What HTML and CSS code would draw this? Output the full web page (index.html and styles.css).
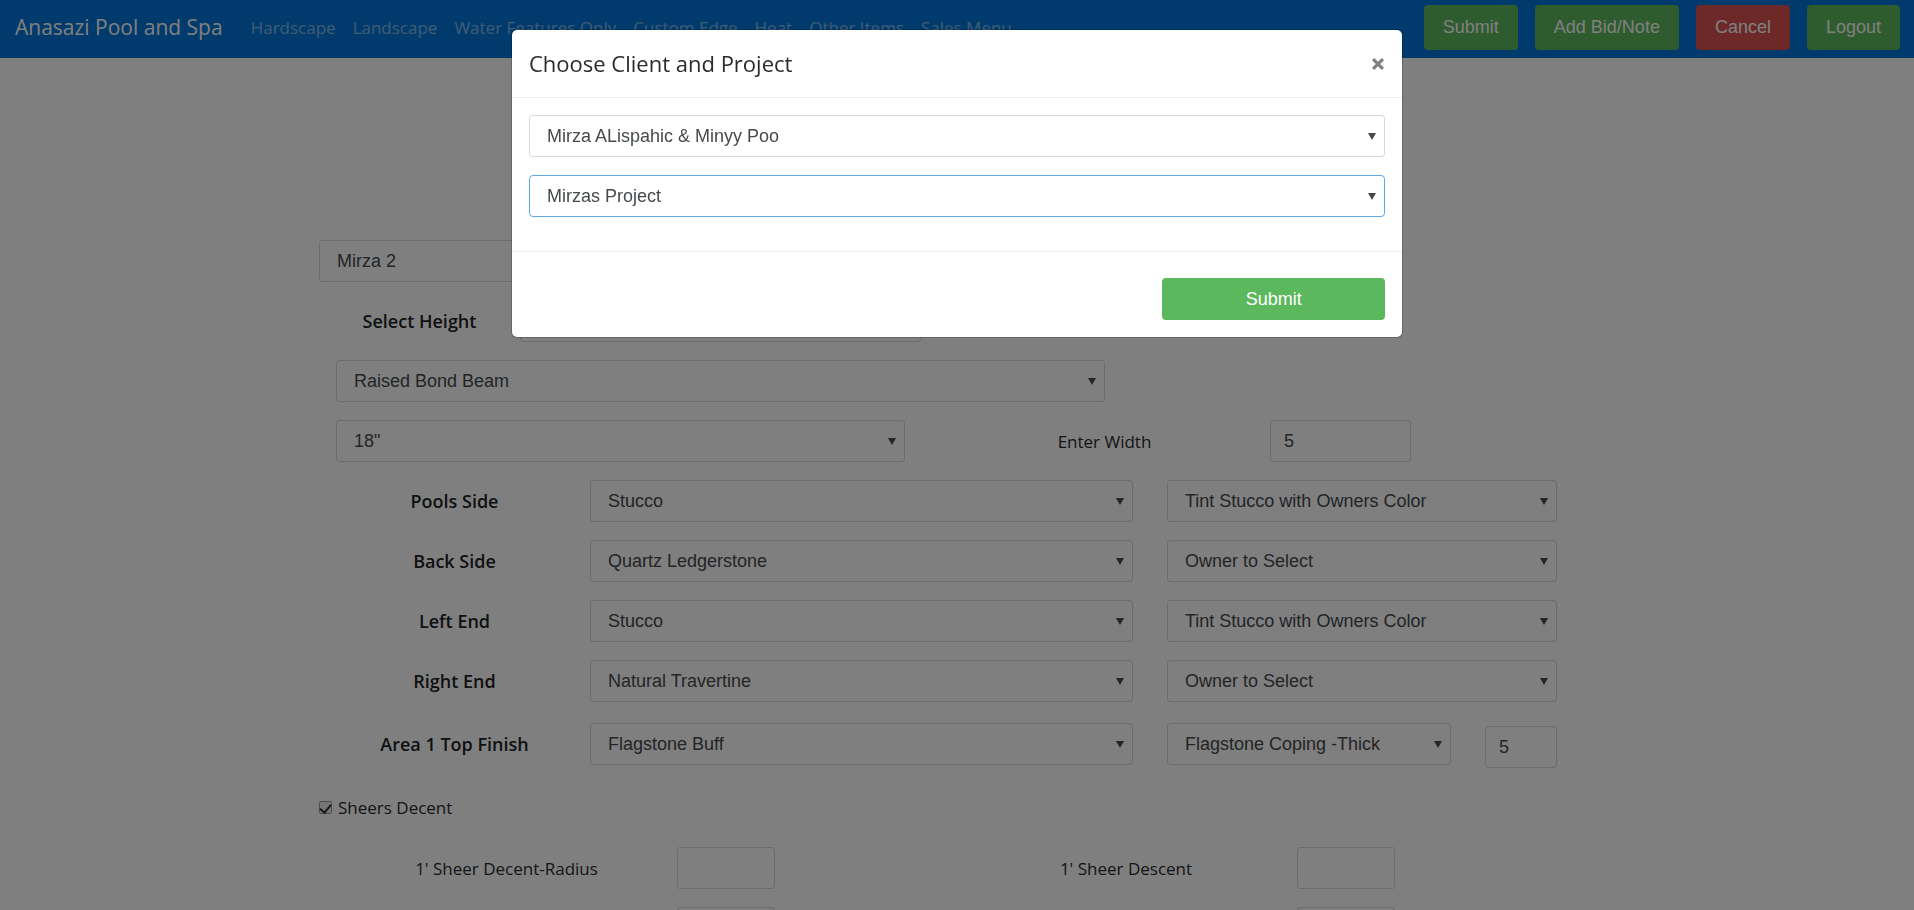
FILE: index.html
```html
<!DOCTYPE html>
<html lang="en">
<head>
<meta charset="utf-8">
<meta name="viewport" content="width=device-width, initial-scale=1">
<title>Anasazi Pool and Spa</title>
<link rel="stylesheet" href="styles.css">
</head>
<body class="modal-open">
<header class="navbar">
  <a class="brand" href="#">Anasazi Pool and Spa</a>
  <nav class="nav-links">
    <a href="#">Hardscape</a>
    <a href="#">Landscape</a>
    <a href="#">Water Features Only</a>
    <a href="#">Custom Edge</a>
    <a href="#">Heat</a>
    <a href="#">Other Items</a>
    <a href="#">Sales Menu</a>
  </nav>
  <div class="nav-actions">
    <button class="btn btn-success" type="button">Submit</button>
    <button class="btn btn-success" type="button">Add Bid/Note</button>
    <button class="btn btn-danger" type="button">Cancel</button>
    <button class="btn btn-success" type="button">Logout</button>
  </div>
</header>

<main class="page">
  <form class="form">
    <div class="row row-client">
      <div class="select"><select aria-label="Client"><option>Mirza 2</option></select></div>
    </div>
    <div class="row row-height">
      <label class="strong" for="height">Select Height</label>
      <div class="select"><select id="height"><option></option></select></div>
    </div>
    <div class="row row-beam">
      <div class="select"><select aria-label="Beam type"><option>Raised Bond Beam</option></select></div>
    </div>
    <div class="row row-width">
      <div class="select"><select aria-label="Beam height"><option>18"</option></select></div>
      <label for="width">Enter Width</label>
      <input class="field" id="width" type="text" value="5">
    </div>
    <div class="row row-side">
      <label class="strong" for="pools">Pools Side</label>
      <div class="select"><select id="pools"><option>Stucco</option></select></div>
      <div class="select"><select aria-label="Pools side color"><option>Tint Stucco with Owners Color</option></select></div>
    </div>
    <div class="row row-side">
      <label class="strong" for="back">Back Side</label>
      <div class="select"><select id="back"><option>Quartz Ledgerstone</option></select></div>
      <div class="select"><select aria-label="Back side color"><option>Owner to Select</option></select></div>
    </div>
    <div class="row row-side">
      <label class="strong" for="left">Left End</label>
      <div class="select"><select id="left"><option>Stucco</option></select></div>
      <div class="select"><select aria-label="Left end color"><option>Tint Stucco with Owners Color</option></select></div>
    </div>
    <div class="row row-side">
      <label class="strong" for="right">Right End</label>
      <div class="select"><select id="right"><option>Natural Travertine</option></select></div>
      <div class="select"><select aria-label="Right end color"><option>Owner to Select</option></select></div>
    </div>
    <div class="row row-side row-top">
      <label class="strong" for="top">Area 1 Top Finish</label>
      <div class="select"><select id="top"><option>Flagstone Buff</option></select></div>
      <div class="coping">
        <div class="select"><select aria-label="Coping"><option>Flagstone Coping -Thick</option></select></div>
        <input class="field" type="text" value="5" aria-label="Coping amount">
      </div>
    </div>
    <div class="check-row">
      <input id="sheers" type="checkbox" checked>
      <label for="sheers">Sheers Decent</label>
    </div>
    <div class="row row-sheer">
      <label for="s1r">1' Sheer Decent-Radius</label>
      <input class="field" id="s1r" type="text">
      <label for="s1">1' Sheer Descent</label>
      <input class="field" id="s1" type="text">
    </div>
    <div class="row row-sheer">
      <input class="field" type="text" aria-label="Second radius quantity">
      <input class="field" type="text" aria-label="Second quantity">
    </div>
  </form>
</main>

<div class="backdrop">
  <section class="modal" role="dialog" aria-modal="true" aria-labelledby="modal-title">
    <header class="modal-header">
      <h1 class="modal-title" id="modal-title">Choose Client and Project</h1>
      <button class="close" type="button" aria-label="Close"><svg viewBox="0 0 13 13" aria-hidden="true"><path d="M2 2l9 9M11 2l-9 9"/></svg></button>
    </header>
    <div class="modal-body">
      <div class="select"><select aria-label="Client"><option>Mirza ALispahic &amp; Minyy Poo</option></select></div>
      <div class="select active"><select aria-label="Project"><option>Mirzas Project</option></select></div>
    </div>
    <footer class="modal-footer">
      <button class="btn btn-success" type="button">Submit</button>
    </footer>
  </section>
</div>
</body>
</html>
```
FILE: styles.css
```css
* { box-sizing: border-box; }

body {
  margin: 0;
  color: #292b2c;
  background: #fff;
  font: 17px/27px "Segoe UI", "Open Sans", sans-serif;
}

.modal-open { height: 100vh; overflow: hidden; }

/* Navigation bar */
.navbar {
  display: flex;
  align-items: center;
  height: 58px;
  padding: 0 14px 3px 15px;
  background: #0275d8;
  white-space: nowrap;
}
.navbar a { text-decoration: none; }
.brand { margin-right: 28px; color: #fff; font-size: 21px; }
.nav-links { display: flex; gap: 17px; }
.nav-links a { color: rgba(255, 255, 255, 0.5); }
.nav-actions {
  display: flex;
  gap: 17px;
  margin-left: auto;
}

.btn {
  height: 45px;
  padding: 0 19px;
  border: 0;
  border-radius: 4px;
  color: #fff;
  font: 18px/27px "Liberation Sans", Arial, sans-serif;
}
.btn-success { background: #5cb85c; }
.btn-danger { background: #d9534f; }

/* Bid form */
.page { padding-top: 182px; }
.form {
  display: flex;
  flex-direction: column;
  gap: 18px;
  width: 66.6667%;
  margin: 0 auto;
}
.row { display: grid; align-items: center; }
.row > label { text-align: center; }
.row > .strong { font-size: 18px; font-weight: 600; color: #212324; }

.row-client { grid-template-columns: 50%; }
.row-height { grid-template-columns: 201fr 401fr 674fr; }
.row-beam { grid-template-columns: 769fr 490fr; padding-left: 17px; }
.row-width { grid-template-columns: 569fr 365fr 141fr 184fr; padding-left: 17px; }
.row-width > label { padding-left: 34px; }
.row-side { grid-template-columns: 254fr 543fr 34fr 390fr; padding: 0 38px 0 17px; }
.row-side > label { padding-right: 17px; }
.row-side > :last-child { grid-column: 4; }
.row-top { align-items: start; margin-top: 3px; }
.row-top > label { padding-top: 8px; }
.coping { display: grid; grid-template-columns: 284fr 72fr; gap: 34px; }
.coping .field { margin-top: 3px; }
.row-sheer { grid-template-columns: 358fr 98fr 522fr 98fr 200fr; }
.row-sheer > .field:first-of-type { grid-column: 2; }
.row-sheer > .field:last-child { grid-column: 4; }
.row-sheer > label:first-child { padding-left: 17px; }
.row-sheer > label:nth-of-type(2) { padding-left: 180px; }

.check-row {
  display: flex;
  align-items: center;
  gap: 6px;
  padding: 8px 0;
}
.check-row input {
  appearance: none;
  display: grid;
  place-items: center;
  width: 13px;
  height: 13px;
  margin: 0;
  border: 1px solid #a0a0a0;
  border-radius: 2px;
  background: #ececec;
}
.check-row input:checked::after {
  content: "";
  width: 5px;
  height: 9px;
  border: solid #303030;
  border-width: 0 2px 2px 0;
  transform: rotate(40deg);
}

/* Fields */
.select { position: relative; min-width: 0; }
.select select,
.field {
  display: block;
  width: 100%;
  min-width: 0;
  height: 42px;
  border: 1px solid rgba(0, 0, 0, 0.15);
  border-radius: 4px;
  background: #fff;
  color: #464a4c;
  font: 18px/24px "Liberation Sans", Arial, sans-serif;
}
.select select { appearance: none; padding: 0 32px 0 17px; }
.field { padding: 0 13px; }
.select::after {
  content: "";
  position: absolute;
  top: 18px;
  right: 9px;
  width: 8px;
  height: 7px;
  background: #464a4c;
  clip-path: polygon(0 0, 100% 0, 50% 100%);
  pointer-events: none;
}
.select.active select { border-color: #5fa9e4; outline: 0; }

/* Dialog */
.backdrop {
  position: fixed;
  inset: 0;
  padding: 29px 16px;
  background: rgba(0, 0, 0, 0.5);
}
.modal {
  max-width: 892px;
  margin: 0 auto;
  border: 1px solid rgba(0, 0, 0, 0.2);
  border-radius: 6px;
  background: #fff;
  background-clip: padding-box;
}
.modal-header {
  display: flex;
  align-items: center;
  justify-content: space-between;
  height: 68px;
  padding: 0 17px;
  border-bottom: 1px solid #eceeef;
}
.modal-title { margin: 0; font-size: 22px; font-weight: 500; line-height: 33px; }
.close { width: 14px; height: 14px; padding: 0; border: 0; background: none; }
.close svg { display: block; width: 14px; height: 14px; }
.close path { fill: none; stroke: #808080; stroke-width: 3; }
.modal-body {
  display: flex;
  flex-direction: column;
  gap: 18px;
  padding: 17px 17px 34px;
}
.modal-footer {
  display: flex;
  justify-content: flex-end;
  padding: 26px 17px 17px;
  border-top: 1px solid #eceeef;
}
.modal-footer .btn { width: 26%; height: 42px; }
```
